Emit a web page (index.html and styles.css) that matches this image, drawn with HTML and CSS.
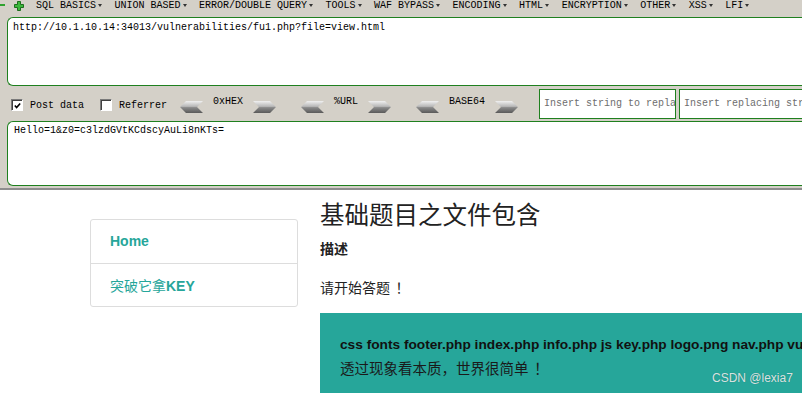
FILE: index.html
```html
<!DOCTYPE html>
<html>
<head>
<meta charset="utf-8">
<link rel="stylesheet" href="styles.css">
</head>
<body>
<div class="hackbar">
  <div class="menu">
    <span class="ico-minus"></span>
    <svg class="ico-plus" width="10" height="10" viewBox="0 0 10 10"><path d="M3.5 0.5h3v3h3v3h-3v3h-3v-3h-3v-3h3z" fill="#3cb83c" stroke="#1d6e1d" stroke-width="1"/></svg>
    <span class="mi">SQL BASICS<i class="caret"></i></span>
    <span class="mi">UNION BASED<i class="caret"></i></span>
    <span class="mi">ERROR/DOUBLE QUERY<i class="caret"></i></span>
    <span class="mi">TOOLS<i class="caret"></i></span>
    <span class="mi">WAF BYPASS<i class="caret"></i></span>
    <span class="mi">ENCODING<i class="caret"></i></span>
    <span class="mi">HTML<i class="caret"></i></span>
    <span class="mi">ENCRYPTION<i class="caret"></i></span>
    <span class="mi">OTHER<i class="caret"></i></span>
    <span class="mi">XSS<i class="caret"></i></span>
    <span class="mi">LFI<i class="caret"></i></span>
  </div>
  <div class="box urlbox">http://10.1.10.14:34013/vulnerabilities/fu1.php?file=view.html</div>
  <div class="tools">
    <span class="cb"><svg width="10" height="10" viewBox="0 0 10 10"><path d="M2 4.5l2 2.2 4-4.4" fill="none" stroke="#000" stroke-width="1.8"/></svg></span>
    <span class="cblabel">Post data</span>
    <span class="cb cb2"></span>
    <span class="cblabel">Referrer</span>
    <div class="enc enc1">
      <svg class="arr" width="23" height="12" viewBox="0 0 23 12"><defs><linearGradient id="g" x1="0" y1="0" x2="0" y2="1"><stop offset="0" stop-color="#f0f0f0"/><stop offset="0.45" stop-color="#b8b8b8"/><stop offset="0.55" stop-color="#8a8a8a"/><stop offset="1" stop-color="#5a5a5a"/></linearGradient></defs><path d="M0 6L6 0H23L17 6L23 12H6Z" fill="url(#g)"/></svg>
      <span class="enclabel">0xHEX</span>
      <svg class="arr" width="23" height="12" viewBox="0 0 23 12"><path d="M23 6L17 0H0L6 6L0 12H17Z" fill="url(#g)"/></svg>
    </div>
    <div class="enc">
      <svg class="arr" width="23" height="12" viewBox="0 0 23 12"><path d="M0 6L6 0H23L17 6L23 12H6Z" fill="url(#g)"/></svg>
      <span class="enclabel">%URL</span>
      <svg class="arr" width="23" height="12" viewBox="0 0 23 12"><path d="M23 6L17 0H0L6 6L0 12H17Z" fill="url(#g)"/></svg>
    </div>
    <div class="enc">
      <svg class="arr" width="23" height="12" viewBox="0 0 23 12"><path d="M0 6L6 0H23L17 6L23 12H6Z" fill="url(#g)"/></svg>
      <span class="enclabel">BASE64</span>
      <svg class="arr" width="23" height="12" viewBox="0 0 23 12"><path d="M23 6L17 0H0L6 6L0 12H17Z" fill="url(#g)"/></svg>
    </div>
    <div class="inp inp1">Insert string to replace</div>
    <div class="inp inp2">Insert replacing string</div>
  </div>
  <div class="box postbox">Hello=1&amp;z0=c3lzdGVtKCdscyAuLi8nKTs=</div>
</div>
<div class="page">
  <div class="nav">
    <div class="navitem">Home</div>
    <div class="navitem"><span class="cjk">突破它拿</span>KEY</div>
  </div>
  <div class="content">
    <h1 class="title">基础题目之文件包含</h1>
    <h4 class="sub">描述</h4>
    <p class="desc">请开始答题<span class="bang">！</span></p>
    <div class="panel">
      <div class="files">css fonts footer.php index.php info.php js key.php logo.png nav.php vulnerabilities</div>
      <div class="hint">透过现象看本质，世界很简单<span class="bang">！</span></div>
    </div>
  </div>
  <div class="watermark">CSDN @lexia7</div>
</div>
</body>
</html>
```

FILE: styles.css
```css
html, body {
  margin: 0;
  padding: 0;
  width: 802px;
  height: 393px;
  overflow: hidden;
  background: #fff;
  text-spacing-trim: space-all;
}
.hackbar {
  background: #d4d0c8;
  font-family: "Liberation Mono", monospace;
  font-size: 10px;
  color: #000;
  padding-bottom: 2px;
  border-bottom: 2px solid #8e8e8e;
  overflow: hidden;
}
.menu {
  height: 17px;
  display: flex;
  align-items: flex-start;
  white-space: nowrap;
}
.menu > * { flex: none; }
.ico-minus {
  display: block;
  width: 5px;
  height: 2px;
  background: #2fa22f;
  margin-top: 4px;
  margin-right: 9px;
}
.ico-plus {
  display: block;
  margin-top: 1px;
  margin-right: 12px;
}
.mi {
  display: flex;
  align-items: center;
  line-height: 11px;
  margin-right: 12.5px;
}
.caret {
  display: inline-block;
  width: 0;
  height: 0;
  border-left: 2px solid transparent;
  border-right: 2px solid transparent;
  border-top: 3px solid #333;
  margin-left: 2px;
}
.box {
  background: #fff;
  border: 1px solid #1f801f;
  border-right: none;
  border-radius: 6px 0 0 6px;
  margin-left: 7px;
  box-sizing: border-box;
  white-space: nowrap;
  line-height: 12px;
}
.urlbox {
  height: 69px;
  padding: 4px 5px;
}
.postbox {
  height: 65px;
  padding: 3px 6px;
}
.tools {
  height: 35px;
  display: flex;
  align-items: center;
  padding-left: 11px;
  white-space: nowrap;
}
.tools > * { flex: none; }
.cb {
  width: 12px;
  height: 12px;
  box-sizing: border-box;
  background: #fff;
  border-top: 1px solid #7a7a7a;
  border-left: 1px solid #7a7a7a;
  border-bottom: 1px solid #fff;
  border-right: 1px solid #fff;
  box-shadow: inset 1px 1px 0 #404040;
  display: flex;
  align-items: center;
  justify-content: center;
  margin-top: 3px;
}
.cb svg { display: block; margin: 1px 0 0 1px; }
.cblabel {
  margin-left: 7px;
  margin-top: 3px;
}
.cb2 { margin-left: 16px; }
.enc {
  display: flex;
  align-items: center;
  gap: 10px;
  margin-left: 25px;
}
.enc1 { margin-left: 13px; }
.arr { display: block; margin-top: 6px; }
.enclabel { line-height: 10px; margin-top: -3px; }
.inp {
  height: 30px;
  box-sizing: border-box;
  border: 1px solid #1f801f;
  background: #fff;
  color: #6e6e6e;
  line-height: 28px;
  padding-left: 4px;
  overflow: hidden;
}
.inp1 { width: 137px; margin-left: 21px; }
.inp2 { width: 160px; margin-left: 3px; }

.page {
  position: relative;
  display: flex;
  padding-left: 90px;
  font-family: "Liberation Sans", "Noto Sans CJK SC", sans-serif;
  font-size: 14px;
  color: #333;
  height: 203px;
}
.nav {
  flex: none;
  width: 208px;
  box-sizing: border-box;
  border: 1px solid #ddd;
  border-radius: 3px;
  margin-top: 29px;
  align-self: flex-start;
}
.navitem {
  height: 43px;
  line-height: 43px;
  padding-left: 19px;
  color: #26a69a;
  font-weight: bold;
}
.navitem + .navitem {
  border-top: 1px solid #ddd;
  height: 42px;
  line-height: 42px;
}
.cjk {
  font-weight: normal;
  font-family: "Noto Sans CJK SC", sans-serif;
}
.content {
  margin-left: 22px;
  flex: 1;
  min-width: 0;
}
.title {
  margin: 10px 0 0;
  font-size: 24.5px;
  font-weight: normal;
  line-height: 28px;
  color: #222;
  font-family: "Noto Sans CJK SC", sans-serif;
}
.sub {
  margin: 10px 0 0;
  font-size: 14px;
  line-height: 20px;
  font-weight: bold;
  color: #222;
  font-family: "Noto Sans CJK SC", sans-serif;
}
.desc {
  margin: 19px 0 0;
  line-height: 20px;
  color: #222;
  font-family: "Noto Sans CJK SC", sans-serif;
}
.bang {
  display: inline-block;
  width: 1em;
  text-align: center;
  padding-left: 2px;
  font-family: "Noto Sans CJK JP", sans-serif;
}
.panel {
  margin-top: 16px;
  background: #26a69a;
  padding: 20px 0 20px 20px;
  white-space: nowrap;
  overflow: hidden;
  line-height: 23px;
  color: #111;
}
.files {
  font-weight: bold;
  font-size: 13.7px;
}
.hint {
  font-family: "Noto Sans CJK SC", sans-serif;
  font-size: 14.5px;
  color: #1a1a1a;
}
.watermark {
  position: absolute;
  left: 712px;
  top: 180px;
  font-size: 12px;
  line-height: 16px;
  color: rgba(240, 240, 240, 0.9);
  text-shadow: 0 0 1px rgba(0, 0, 0, 0.25);
}
```
